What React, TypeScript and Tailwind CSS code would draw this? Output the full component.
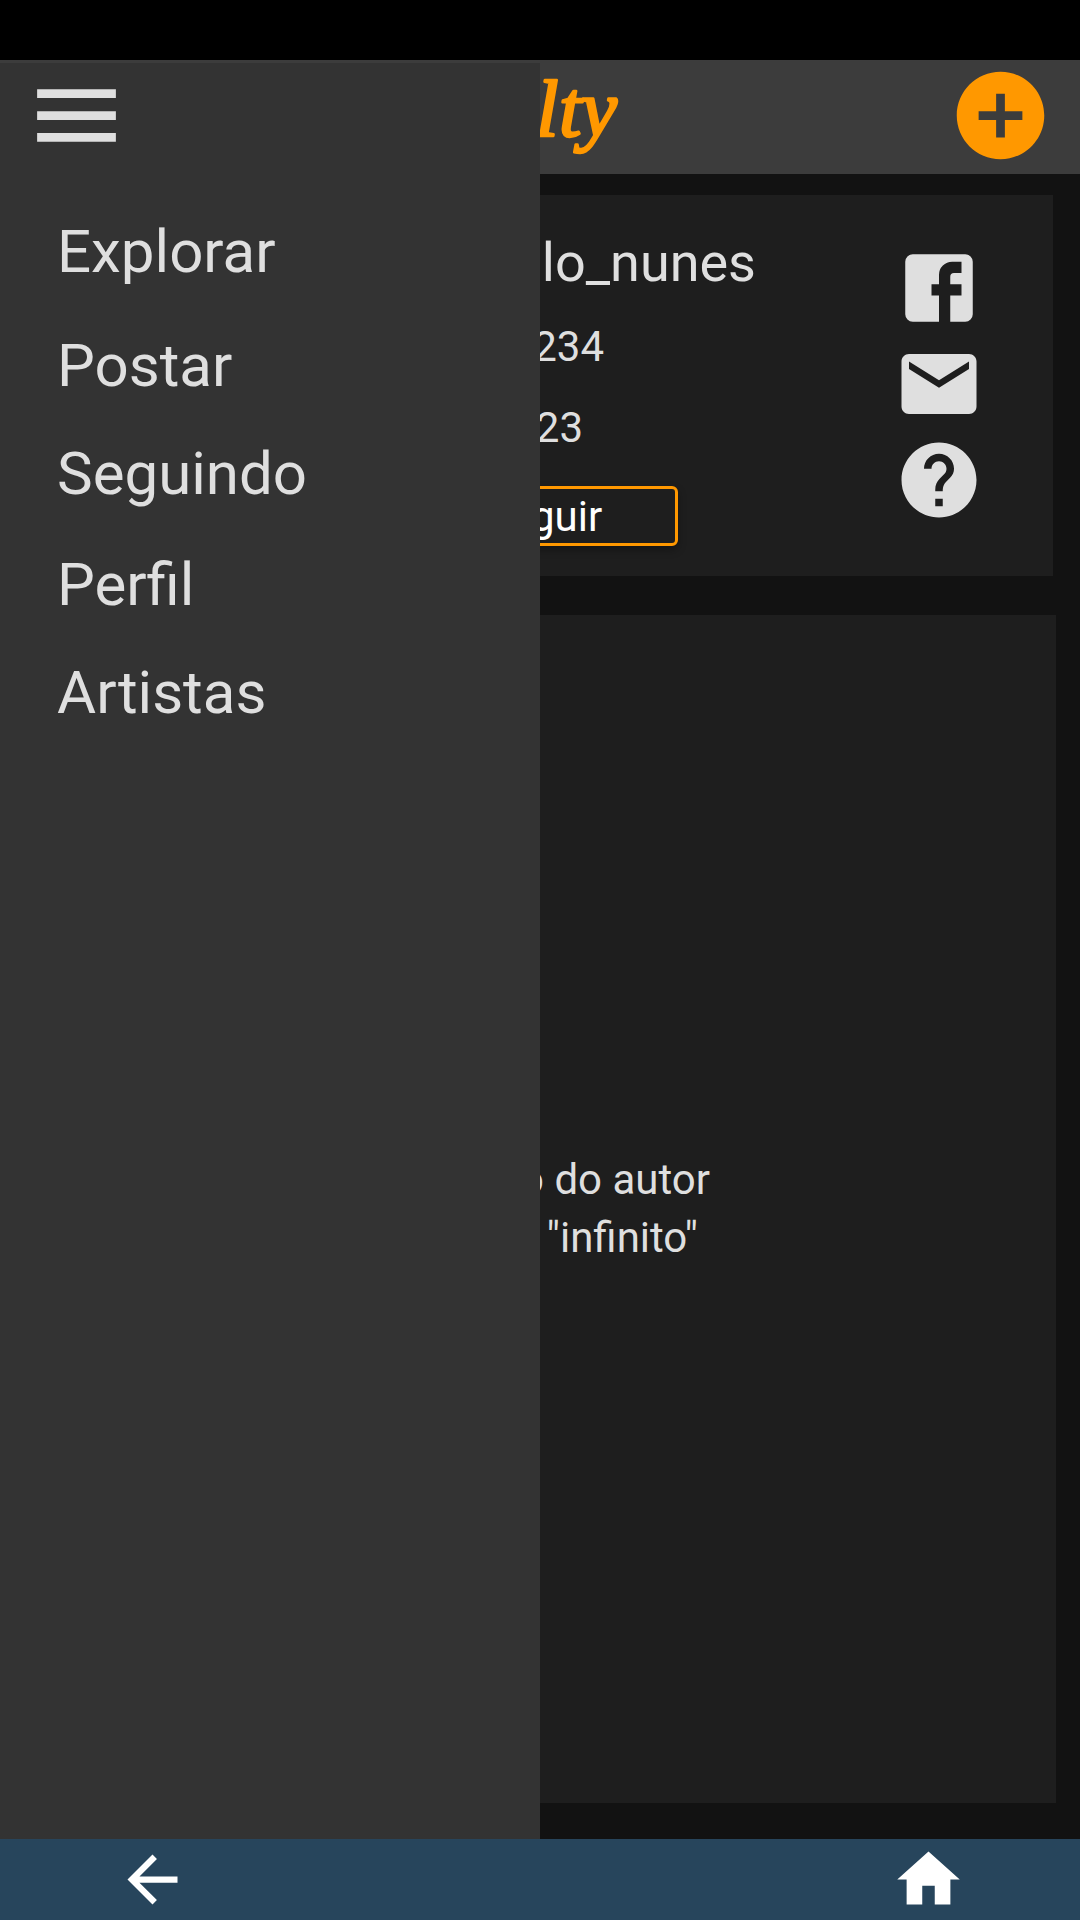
import type { ReactNode } from "react";

const icons = {
  menu: "M3 18h18v-2H3v2zm0-5h18v-2H3v2zm0-7v2h18V6H3z",
  add: "M12 2C6.48 2 2 6.48 2 12s4.48 10 10 10 10-4.48 10-10S17.52 2 12 2zm5 11h-4v4h-2v-4H7v-2h4V7h2v4h4v2z",
  facebook:
    "M5 3H19A2 2 0 0 1 21 5V19A2 2 0 0 1 19 21H15V14H18V11H15V9A1 1 0 0 1 16 8H18V5H15.5A3.5 3.5 0 0 0 12 8.5V11H10V14H12V21H5A2 2 0 0 1 3 19V5A2 2 0 0 1 5 3Z",
  mail: "M20 4H4c-1.1 0-2 .9-2 2v12c0 1.1.9 2 2 2h16c1.1 0 2-.9 2-2V6c0-1.1-.9-2-2-2zm0 4l-8 5-8-5V6l8 5 8-5v2z",
  help: "M12 2C6.48 2 2 6.48 2 12s4.48 10 10 10 10-4.48 10-10S17.52 2 12 2zm1 17h-2v-2h2v2zm2.07-7.75l-.9.92C13.45 12.9 13 13.5 13 15h-2v-.5c0-1.1.45-2.1 1.17-2.83l1.24-1.26c.37-.36.59-.86.59-1.41 0-1.1-.9-2-2-2s-2 .9-2 2H8c0-2.21 1.79-4 4-4s4 1.79 4 4c0 .88-.36 1.68-.93 2.25z",
  back: "M20 11H7.83l5.59-5.59L12 4l-8 8 8 8 1.41-1.41L7.83 13H20v-2z",
  home: "M10 20v-6h4v6h5v-8h3L12 3 2 12h3v8z",
};

function Icon({ name, className }: { name: keyof typeof icons; className: string }) {
  return (
    <svg viewBox="0 0 24 24" fill="currentColor" className={className}>
      <path d={icons[name]} />
    </svg>
  );
}

function MenuItem({ children, className = "" }: { children: ReactNode; className?: string }) {
  return (
    <a className={`block h-[60px] text-[60px] leading-[60px] whitespace-nowrap ${className}`}>
      {children}
    </a>
  );
}

function Logo() {
  return (
    <svg viewBox="0 0 100 114" className="ml-[530px] h-[114px] w-[100px] text-[#ff9800]">
      <text
        x="6 29 51"
        y="76"
        fill="currentColor"
        stroke="currentColor"
        strokeWidth="2.6"
        strokeLinejoin="round"
        className="font-['Liberation_Serif',serif] text-[81px] italic"
      >
        lty
      </text>
    </svg>
  );
}

function Drawer() {
  return (
    <aside className="absolute top-[63px] left-0 h-[1776px] w-[540px] bg-[#333333]">
      <Icon name="menu" className="ml-6 size-[105px]" />
      <nav className="mt-[54px] ml-[57px]">
        <MenuItem>Explorar</MenuItem>
        <MenuItem className="mt-[54px]">Postar</MenuItem>
        <MenuItem className="mt-12">Seguindo</MenuItem>
        <MenuItem className="mt-[51px]">Perfil</MenuItem>
        <MenuItem className="mt-12">Artistas</MenuItem>
      </nav>
    </aside>
  );
}

export default function App() {
  return (
    <div className="h-[1920px] w-full overflow-hidden bg-white">
      <div className="relative flex h-full w-[1080px] flex-col bg-[#121212] font-['Roboto',sans-serif] text-[#dfdfdf]">
        <div className="h-[60px] bg-black" />
        <header className="flex h-[114px] bg-[#3c3c3c]">
          <Logo />
          <Icon name="add" className="mt-[3px] ml-[318px] size-[105px] text-[#ff9800]" />
        </header>

        <main className="flex-1">
          <section className="mt-[21px] mr-[27px] ml-6 flex h-[381px] justify-between bg-[#1e1e1e]">
            <div className="flex w-[732px] flex-col items-end">
              <h1 className="mt-[41px] text-[54px] leading-[54px]">lo_nunes</h1>
              <p className="mt-[27px] mr-[152px] text-[42px] leading-[60px]">234</p>
              <p className="mt-[21px] mr-[173px] text-[42px] leading-[60px]">23</p>
              <button className="mt-[28px] mr-[78px] flex h-[60px] w-[268px] justify-center rounded-[6px] border-[3px] border-[#ff9800] pr-[2px] text-[42px] leading-[56px] text-white shadow-[0_4px_8px_rgba(0,0,0,0.3)]">
                Seguir
              </button>
            </div>
            <div className="mt-12 mr-[69px] flex flex-col gap-[6px]">
              <Icon name="facebook" className="size-[90px]" />
              <Icon name="mail" className="size-[90px]" />
              <Icon name="help" className="size-[90px]" />
            </div>
          </section>
          <section className="mt-[39px] mr-6 ml-6 h-[1188px] bg-[#1e1e1e] pt-[536px]">
            <div className="flex w-[686px] flex-col items-end text-[42px] leading-[58px]">
              <p>o do autor</p>
              <p className="mr-[12px]">"infinito"</p>
            </div>
          </section>
        </main>

        <footer className="flex h-[81px] justify-between bg-[#27455c] pt-[3px] pr-[114px] pl-[114.5px] text-white">
          <Icon name="back" className="size-[75px]" />
          <Icon name="home" className="size-[75px]" />
        </footer>
        <Drawer />
      </div>
    </div>
  );
}
